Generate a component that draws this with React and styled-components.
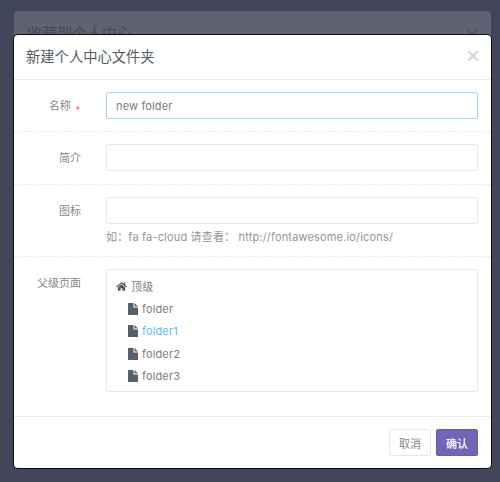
import React from "react"
import styled, { createGlobalStyle } from "styled-components"
import { FaHome } from "react-icons/fa"

const GlobalStyle = createGlobalStyle`
  html, body {
    margin: 0;
    padding: 0;
    background: #41465a;
  }
  * {
    box-sizing: border-box;
  }
`

const Page = styled.div`
  position: relative;
  width: 500px;
  height: 482px;
  overflow: hidden;
  background: #41465a;
  padding: 11px 9px 0 14px;
  font-family: "Inter", "Noto Sans CJK SC", sans-serif;
  color: #6a6c6f;
`

const BackModal = styled.div`
  height: 60px;
  background: #5f6272;
  border-radius: 4px;
  padding: 11px 12px 0 13px;
  display: flex;
  justify-content: space-between;
  font-size: 15px;
  line-height: 24px;
  color: #45495a;
`

const BackClose = styled.span`
  font-family: "Liberation Sans", sans-serif;
  font-size: 24px;
  color: #4f5264;
`

const Dialog = styled.div`
  position: absolute;
  left: 14px;
  top: 35px;
  width: 477px;
  height: 433px;
  background: #fff;
  border-radius: 4px;
  box-shadow: 0 0 0 1px #0c0d12;
  display: flex;
  flex-direction: column;
`

const Header = styled.div`
  height: 45px;
  flex: none;
  padding: 0 11px 3px 12px;
  border-bottom: 1px solid #e9ecec;
  display: flex;
  align-items: center;
  justify-content: space-between;
`

const Title = styled.h4`
  margin: 0;
  font-size: 14.3px;
  font-weight: 400;
  color: #555b5f;
`

const Close = styled.span`
  font-family: "Liberation Sans", sans-serif;
  font-size: 24px;
  line-height: 19px;
  color: #d0d0d0;
`

const Row = styled.div`
  display: flex;
  padding: 12px 13px 12px 0;
  height: ${props => props.height}px;
  flex: none;
  border-bottom: ${props => (props.last ? "none" : "1px dashed #e6eeee")};
`

const Label = styled.label`
  width: 92px;
  flex: none;
  text-align: right;
  padding-right: 25px;
  font-size: 11px;
  line-height: 28px;
  color: #85878a;
`

const Star = styled.span`
  color: #f08a8a;
  margin-left: 4px;
  font-size: 6px;
`

const Field = styled.div`
  flex: 1;
  min-width: 0;
`

const Input = styled.input`
  display: block;
  width: 100%;
  height: 27px;
  border: 1px solid ${props => (props.active ? "#a3d8f1" : "#e4eaec")};
  border-radius: 2px;
  outline: none;
  padding: 0 9px;
  font-family: inherit;
  font-size: 11px;
  letter-spacing: 0.15px;
  color: #7a7c7e;
`

const Help = styled.p`
  margin: 5px 0 0;
  font-size: 11px;
  line-height: 16px;
  letter-spacing: 0.17px;
  color: #939597;
`

const Tree = styled.div`
  height: 123px;
  border: 1px solid #e4eaec;
  border-radius: 2px;
  padding: 5px 9px;
  font-size: 11px;
`

const TreeRow = styled.div`
  display: flex;
  align-items: center;
  height: 22.5px;
  gap: 4px;
  padding-left: ${props => (props.nested ? "12px" : "0")};
  letter-spacing: 0.15px;
  color: ${props => (props.active ? "#5bbde8" : "#7c7e82")};
`

const HomeIcon = styled(FaHome)`
  width: 11px;
  height: 11px;
  color: #4f5b63;
`

const FileSvg = styled.svg`
  width: 10px;
  height: 12px;
  flex: none;
`

const Footer = styled.div`
  margin-top: auto;
  height: 52px;
  flex: none;
  border-top: 1px solid #e9ecec;
  padding: 12px 13px 0 0;
  display: flex;
  justify-content: flex-end;
  gap: 5px;
`

const Button = styled.button`
  width: 42px;
  height: 27px;
  padding: 0;
  border: 1px solid ${props => (props.primary ? "#6a5bac" : "#e6eaea")};
  border-radius: 2px;
  background: ${props => (props.primary ? "#7265b5" : "#fff")};
  color: ${props => (props.primary ? "#fff" : "#86888b")};
  font-family: inherit;
  font-size: 11px;
  font-weight: ${props => (props.primary ? 500 : 400)};
`

const FileIcon = () => (
  <FileSvg viewBox="0 0 10 12">
    <path d="M0 0h5.5v4.5H10V12H0z" fill="#55606a" />
    <path d="M6.5 0L10 3.5H6.5z" fill="#55606a" />
  </FileSvg>
)

const folders = ["folder", "folder1", "folder2", "folder3"]

export default function App() {
  return (
    <Page>
      <GlobalStyle />
      <BackModal>
        <span>收藏到个人中心</span>
        <BackClose>×</BackClose>
      </BackModal>
      <Dialog>
        <Header>
          <Title>新建个人中心文件夹</Title>
          <Close>×</Close>
        </Header>
        <Row height={52}>
          <Label>
            名称<Star>★</Star>
          </Label>
          <Field>
            <Input active defaultValue="new folder" />
          </Field>
        </Row>
        <Row height={53}>
          <Label>简介</Label>
          <Field>
            <Input />
          </Field>
        </Row>
        <Row height={72}>
          <Label>图标</Label>
          <Field>
            <Input />
            <Help>如：fa fa-cloud 请查看： http://fontawesome.io/icons/</Help>
          </Field>
        </Row>
        <Row height={147} last>
          <Label>父级页面</Label>
          <Field>
            <Tree>
              <TreeRow>
                <HomeIcon />
                顶级
              </TreeRow>
              {folders.map(name => (
                <TreeRow nested active={name === "folder1"} key={name}>
                  <FileIcon />
                  {name}
                </TreeRow>
              ))}
            </Tree>
          </Field>
        </Row>
        <Footer>
          <Button>取消</Button>
          <Button primary>确认</Button>
        </Footer>
      </Dialog>
    </Page>
  )
}
